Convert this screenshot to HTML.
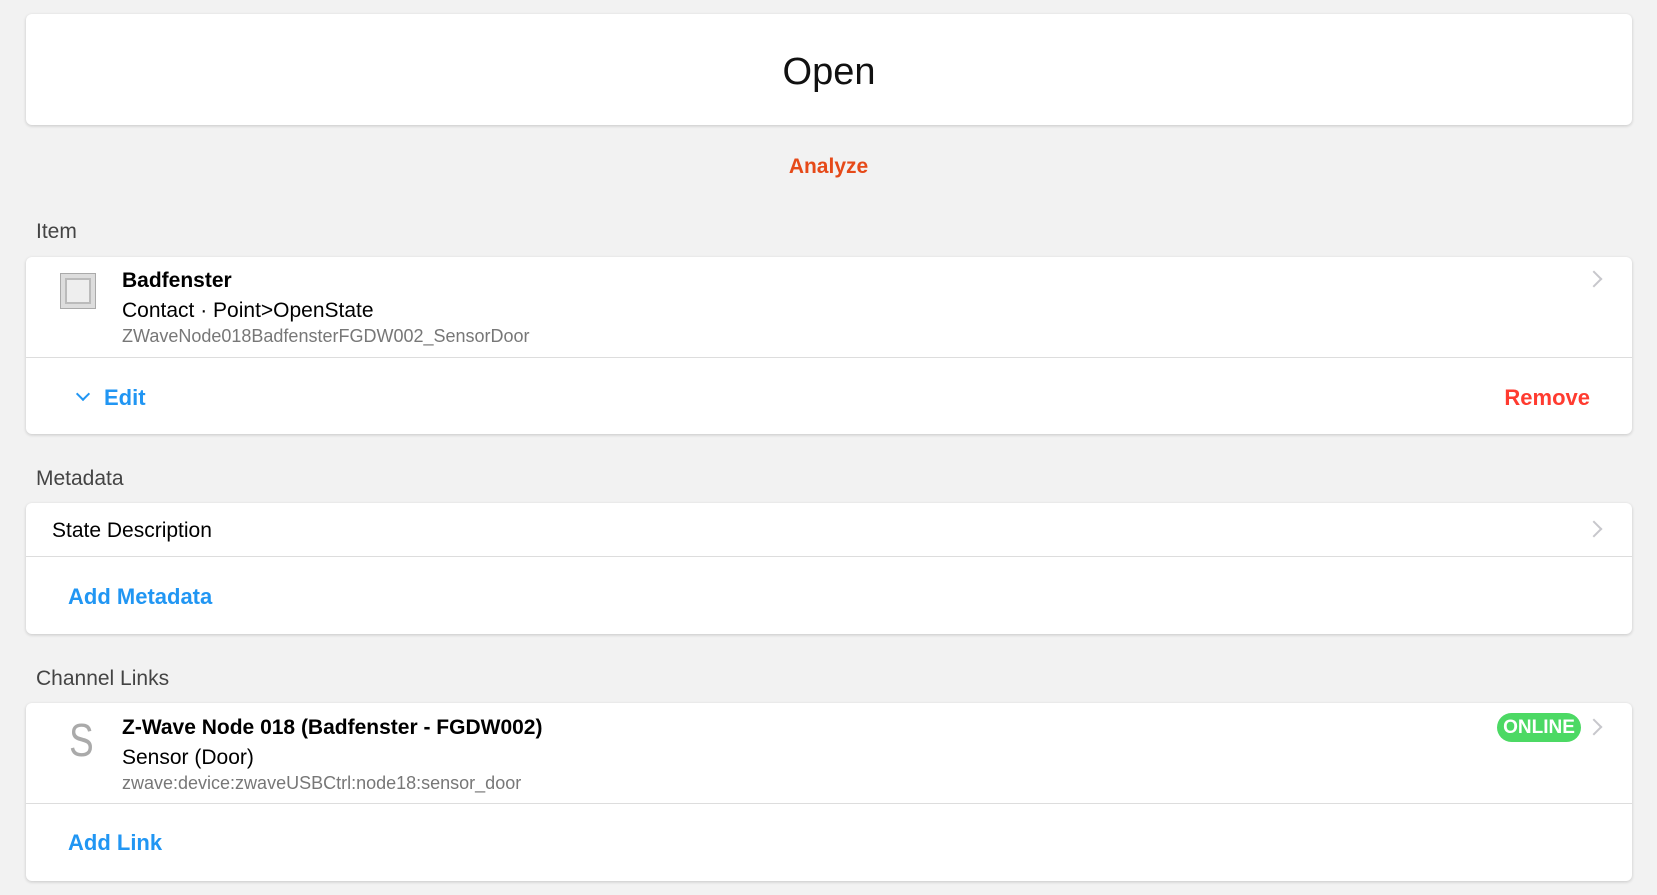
<!DOCTYPE html>
<html><head><style>
body{margin:0;background:#f2f2f2;width:1657px;height:895px;font-family:"Liberation Sans",sans-serif;position:relative;overflow:hidden}
.card{position:absolute;left:26px;width:1606px;background:#fff;border-radius:6px;box-shadow:0 1px 3px rgba(0,0,0,.18)}
.abs{position:absolute;white-space:nowrap}
.lbl{position:absolute;left:36px;font-size:21px;color:#444}
.sep{position:absolute;left:0;right:0;height:1px;background:#ddd}
.chev{position:absolute;width:10px;height:10px;border-right:2px solid #c7c7cc;border-top:2px solid #c7c7cc;transform:rotate(45deg)}
.blue{color:#2196f3;font-weight:bold}
</style></head><body>
<div class="card" style="top:14px;height:111px"><div class="abs" style="left:0;right:0;text-align:center;top:37px;font-size:38px;color:#111">Open</div></div>
<div class="abs" style="left:0;width:1657px;text-align:center;top:155px;font-size:21px;color:#e64a19;font-weight:bold">Analyze</div>
<div class="lbl" style="top:220px">Item</div>
<div class="card" style="top:257px;height:177px">
 <div class="abs" style="left:34px;top:16px;width:36px;height:36px;border:1px solid #aaa;background:#ddd;box-sizing:border-box"><div style="margin:4px;height:26px;border:2px solid #bbb;background:#eee;box-sizing:border-box"></div></div>
 <div class="abs" style="left:96px;top:12px;font-size:21px;font-weight:bold;color:#000">Badfenster</div>
 <div class="abs" style="left:96px;top:42px;font-size:21px;color:#000">Contact · Point&gt;OpenState</div>
 <div class="abs" style="left:96px;top:69px;font-size:18px;color:#777">ZWaveNode018BadfensterFGDW002_SensorDoor</div>
 <div class="chev" style="right:32px;top:16px"></div>
 <div class="sep" style="top:100px"></div>
 <div class="abs" style="left:52px;top:132px;width:8px;height:8px;border-right:2.5px solid #2196f3;border-bottom:2.5px solid #2196f3;transform:rotate(45deg)"></div>
 <div class="abs blue" style="left:78px;top:128px;font-size:22px">Edit</div>
 <div class="abs" style="right:42px;top:128px;font-size:22px;color:#ff3b30;font-weight:bold">Remove</div>
</div>
<div class="lbl" style="top:467px">Metadata</div>
<div class="card" style="top:503px;height:131px">
 <div class="abs" style="left:26px;top:16px;font-size:21px;color:#000">State Description</div>
 <div class="chev" style="right:32px;top:20px"></div>
 <div class="sep" style="top:53px"></div>
 <div class="abs blue" style="left:42px;top:81px;font-size:22px">Add Metadata</div>
</div>
<div class="lbl" style="top:667px">Channel Links</div>
<div class="card" style="top:703px;height:178px">
 <div class="abs" style="left:40px;top:10px;font-size:46px;color:#aaa;font-weight:300;transform:scaleX(0.8)">S</div>
 <div class="abs" style="left:96px;top:13px;font-size:21px;font-weight:bold;color:#000">Z-Wave Node 018 (Badfenster - FGDW002)</div>
 <div class="abs" style="left:96px;top:43px;font-size:21px;color:#000">Sensor (Door)</div>
 <div class="abs" style="left:96px;top:70px;font-size:18px;color:#777">zwave:device:zwaveUSBCtrl:node18:sensor_door</div>
 <div class="abs" style="left:1471px;top:10px;width:84px;height:29px;border-radius:15px;background:#4cd964;color:#fff;font-weight:bold;font-size:19px;text-align:center;line-height:29px">ONLINE</div>
 <div class="chev" style="right:32px;top:18px"></div>
 <div class="sep" style="top:100px"></div>
 <div class="abs blue" style="left:42px;top:127px;font-size:22px">Add Link</div>
</div>
</body></html>
